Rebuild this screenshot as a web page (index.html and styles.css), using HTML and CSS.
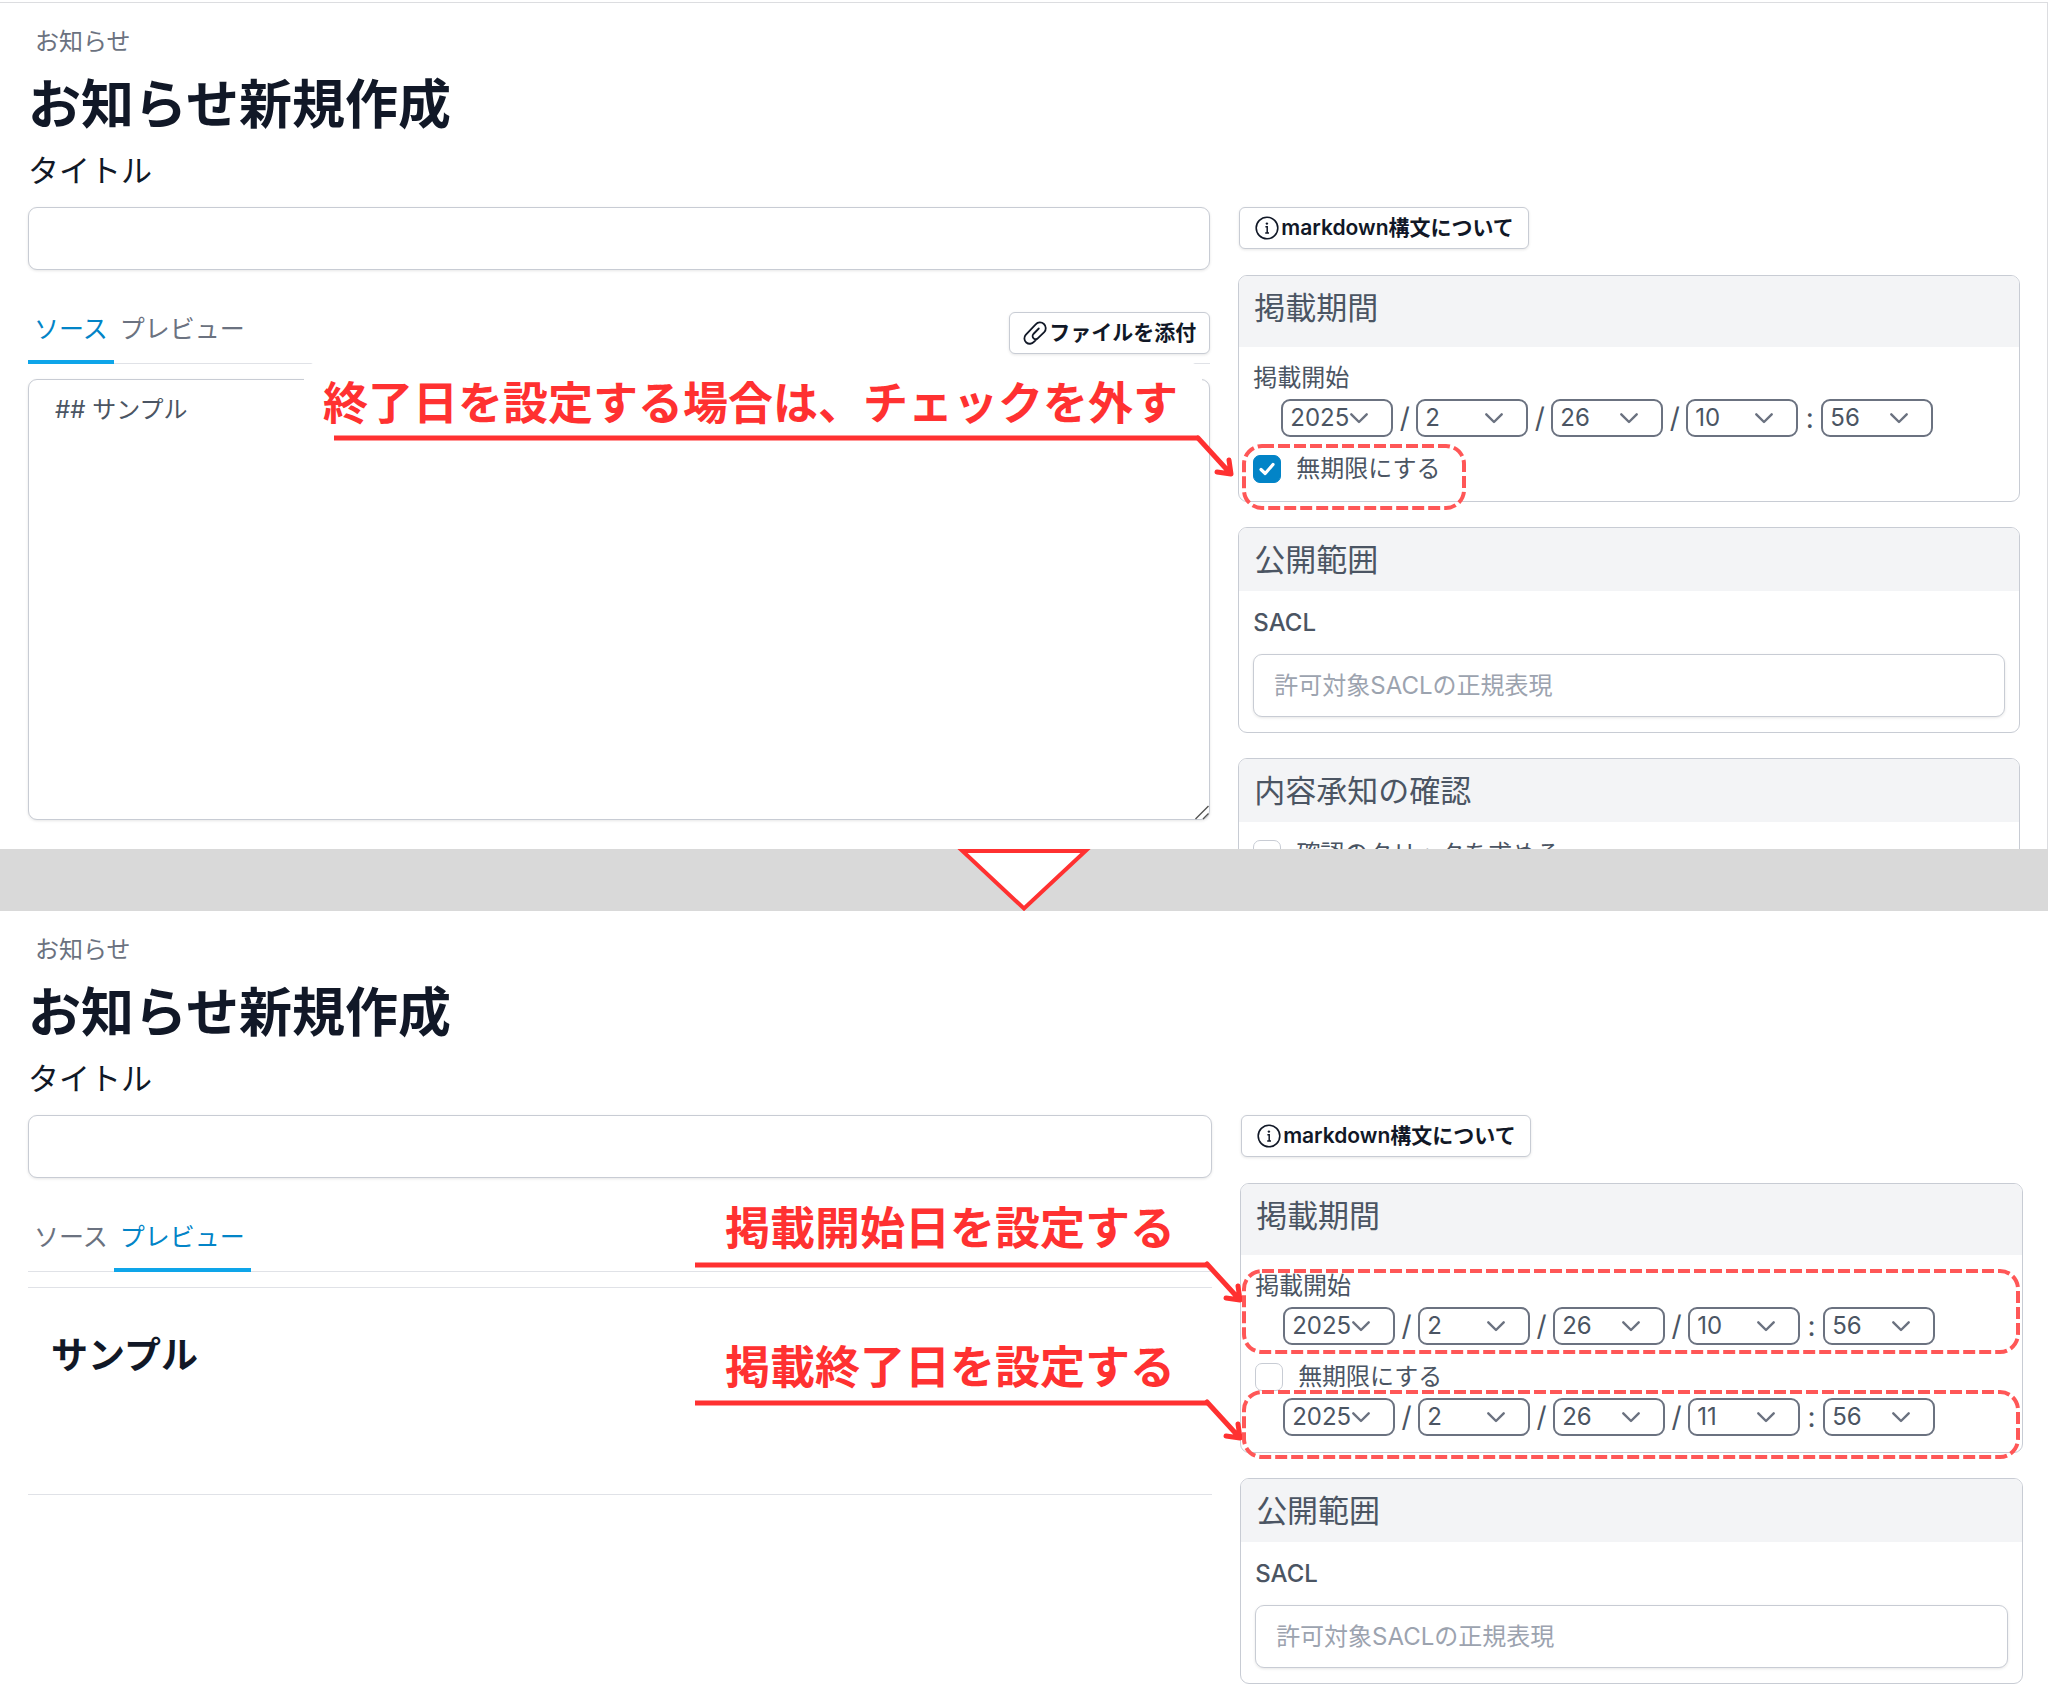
FILE: index.html
```html
<!DOCTYPE html>
<html lang="ja">
<head>
<meta charset="utf-8">
<meta name="viewport" content="width=device-width, initial-scale=1">
<title>お知らせ新規作成</title>
<link rel="stylesheet" href="styles.css">
</head>
<body>
<svg class="sprite" aria-hidden="true">
  <symbol id="chevron" viewBox="0 0 18 11"><path d="M1.300 1.300 9 9l7.700-7.700" fill="none" stroke="currentColor" stroke-width="2.400" stroke-linecap="round" stroke-linejoin="round"/></symbol>
  <symbol id="info" viewBox="0 0 24 24"><circle cx="12" cy="12" r="10.800" fill="none" stroke="currentColor" stroke-width="1.600"/><circle cx="11.900" cy="7.600" r="1.200" fill="currentColor"/><path d="M10.400 10.800h1.800v6M10.200 16.900h3.800" fill="none" stroke="currentColor" stroke-width="1.500"/></symbol>
  <symbol id="clip" viewBox="0 0 24 24"><path d="M12.800 19 10.900 20.900A5.300 5.300 0 0 1 2.700 13.800L12.700 3.300A5.800 5.800 0 0 1 21.200 11.200L15 17.200A3.100 3.100 0 0 1 10.400 13L15.800 7.500" fill="none" stroke="currentColor" stroke-width="1.800" stroke-linecap="round" stroke-linejoin="round"/></symbol>
  <symbol id="arrow" viewBox="0 0 40 44"><path d="M3 3 35 38M34 25 36 39 22 37" fill="none" stroke="currentColor" stroke-width="5" stroke-linecap="round" stroke-linejoin="round"/></symbol>
</svg>

<main class="guide">
  <section class="screen screen-source">
    <nav class="crumb"><a href="#">お知らせ</a></nav>
    <h1 class="heading">お知らせ新規作成</h1>
    <label class="title-label" for="title-a">タイトル</label>
    <div class="columns">
      <div class="editor">
        <input class="field" id="title-a" type="text">
        <div class="toolbar">
          <div class="tabs">
            <button class="tab is-active" type="button">ソース</button>
            <button class="tab" type="button">プレビュー</button>
          </div>
          <button class="btn" type="button"><svg class="icon" aria-hidden="true"><use href="#clip"/></svg>ファイルを添付</button>
        </div>
        <div class="source-wrap">
          <textarea class="source" aria-label="ソース">## サンプル</textarea>
          <svg class="grip" viewBox="0 0 16 16" aria-hidden="true"><path d="M1.500 15 14.500 2M9 15 14.500 9.500" fill="none" stroke="#555" stroke-width="1.400"/></svg>
        </div>
      </div>
      <aside class="side">
        <button class="btn btn-help" type="button"><svg class="icon" aria-hidden="true"><use href="#info"/></svg>markdown構文について</button>
        <section class="card">
          <h2 class="card-head card-head-tall">掲載期間</h2>
          <div class="card-body period">
            <p class="period-label">掲載開始</p>
            <div class="stamp">
              <span class="pick"><select aria-label="年"><option>2025</option></select><svg><use href="#chevron"/></svg></span><span class="sep">/</span>
              <span class="pick"><select aria-label="月"><option>2</option></select><svg><use href="#chevron"/></svg></span><span class="sep">/</span>
              <span class="pick"><select aria-label="日"><option>26</option></select><svg><use href="#chevron"/></svg></span><span class="sep">/</span>
              <span class="pick"><select aria-label="時"><option>10</option></select><svg><use href="#chevron"/></svg></span><span class="sep">:</span>
              <span class="pick"><select aria-label="分"><option>56</option></select><svg><use href="#chevron"/></svg></span>
            </div>
            <label class="check"><span class="box"><input type="checkbox" checked><svg viewBox="0 0 28 28"><path d="M8 14.500 12.200 18.500 20 9.500" fill="none" stroke="#fff" stroke-width="3.200" stroke-linecap="round" stroke-linejoin="round"/></svg></span>無期限にする</label>
          </div>
        </section>
        <section class="card">
          <h2 class="card-head">公開範囲</h2>
          <div class="card-body">
            <label class="sacl-label" for="sacl-a">SACL</label>
            <input class="field" id="sacl-a" type="text" placeholder="許可対象SACLの正規表現">
          </div>
        </section>
        <section class="card">
          <h2 class="card-head">内容承知の確認</h2>
          <div class="card-body">
            <label class="check"><span class="box"><input type="checkbox"></span>確認のクリックを求める</label>
          </div>
        </section>
      </aside>
    </div>
    <p class="callout callout-uncheck">終了日を設定する場合は、チェックを外す</p>
    <svg class="marks" aria-hidden="true">
      <path class="rule" d="M334 435H1198"/>
      <use class="arrow" href="#arrow" x="1195" y="432" width="40" height="44"/>
      <rect class="dash" x="1244" y="443" width="220" height="62" rx="18"/>
    </svg>
  </section>

  <div class="divider">
    <svg viewBox="0 0 134 62" aria-hidden="true"><path d="M5.500 2H128.500L67 59.500Z" fill="#fff" stroke="#ff3131" stroke-width="4"/></svg>
  </div>

  <section class="screen screen-preview">
    <nav class="crumb"><a href="#">お知らせ</a></nav>
    <h1 class="heading">お知らせ新規作成</h1>
    <label class="title-label" for="title-b">タイトル</label>
    <div class="columns">
      <div class="editor">
        <input class="field" id="title-b" type="text">
        <div class="toolbar">
          <div class="tabs">
            <button class="tab" type="button">ソース</button>
            <button class="tab is-active" type="button">プレビュー</button>
          </div>
        </div>
        <article class="preview"><h2>サンプル</h2></article>
      </div>
      <aside class="side">
        <button class="btn btn-help" type="button"><svg class="icon" aria-hidden="true"><use href="#info"/></svg>markdown構文について</button>
        <section class="card">
          <h2 class="card-head card-head-tall">掲載期間</h2>
          <div class="card-body period">
            <p class="period-label">掲載開始</p>
            <div class="stamp">
              <span class="pick"><select aria-label="開始年"><option>2025</option></select><svg><use href="#chevron"/></svg></span><span class="sep">/</span>
              <span class="pick"><select aria-label="開始月"><option>2</option></select><svg><use href="#chevron"/></svg></span><span class="sep">/</span>
              <span class="pick"><select aria-label="開始日"><option>26</option></select><svg><use href="#chevron"/></svg></span><span class="sep">/</span>
              <span class="pick"><select aria-label="開始時"><option>10</option></select><svg><use href="#chevron"/></svg></span><span class="sep">:</span>
              <span class="pick"><select aria-label="開始分"><option>56</option></select><svg><use href="#chevron"/></svg></span>
            </div>
            <label class="check"><span class="box"><input type="checkbox"></span>無期限にする</label>
            <div class="stamp">
              <span class="pick"><select aria-label="終了年"><option>2025</option></select><svg><use href="#chevron"/></svg></span><span class="sep">/</span>
              <span class="pick"><select aria-label="終了月"><option>2</option></select><svg><use href="#chevron"/></svg></span><span class="sep">/</span>
              <span class="pick"><select aria-label="終了日"><option>26</option></select><svg><use href="#chevron"/></svg></span><span class="sep">/</span>
              <span class="pick"><select aria-label="終了時"><option>11</option></select><svg><use href="#chevron"/></svg></span><span class="sep">:</span>
              <span class="pick"><select aria-label="終了分"><option>56</option></select><svg><use href="#chevron"/></svg></span>
            </div>
          </div>
        </section>
        <section class="card">
          <h2 class="card-head">公開範囲</h2>
          <div class="card-body">
            <label class="sacl-label" for="sacl-b">SACL</label>
            <input class="field" id="sacl-b" type="text" placeholder="許可対象SACLの正規表現">
          </div>
        </section>
      </aside>
    </div>
    <p class="callout callout-start">掲載開始日を設定する</p>
    <p class="callout callout-end">掲載終了日を設定する</p>
    <svg class="marks" aria-hidden="true">
      <path class="rule" d="M695 354H1207M695 492H1207"/>
      <use class="arrow" href="#arrow" x="1204" y="350" width="40" height="44"/>
      <use class="arrow" href="#arrow" x="1204" y="488" width="40" height="44"/>
      <rect class="dash" x="1244" y="360" width="774" height="81" rx="18"/>
      <rect class="dash" x="1244" y="481" width="774" height="65" rx="18"/>
    </svg>
  </section>
</main>
</body>
</html>
```

FILE: styles.css
```css
* { box-sizing: border-box; }

body {
  margin: 0;
  background: #fff;
  color: #4b5563;
  font: 24px/32px Inter, "Noto Sans CJK JP", sans-serif;
}

h1, h2, p { margin: 0; font-weight: 400; }
button, input, select, textarea { font: inherit; color: inherit; }

.sprite { display: none; }
.guide { padding-top: 2px; }

/* One captured screen of the form */
.screen {
  position: relative;
  padding: 23px 25px 8px 28px;
}
.screen-source {
  height: 847px;
  padding-right: 27px;
  border-top: 1px solid #dcdde0;
  border-right: 1px solid #dcdde0;
  overflow: hidden;
}

.crumb { padding: 0 7px; }
.crumb a { color: #6b7280; text-decoration: none; }
.heading {
  margin-top: 15px;
  color: #111827;
  font-size: 53px;
  line-height: 64px;
  font-weight: 700;
}
.title-label {
  display: block;
  margin: 14px 0 16px;
  color: #111827;
  font-size: 31px;
  line-height: 40px;
}

.columns {
  display: grid;
  grid-template-columns: minmax(0, 602fr) minmax(0, 398fr);
  gap: 28px;
}
.editor, .side { display: flex; flex-direction: column; }
.side { align-items: flex-start; }

.field {
  display: block;
  width: 100%;
  height: 63px;
  padding: 0 20px;
  border: 1px solid #c8ccd4;
  border-radius: 9px;
  background: #fff;
  box-shadow: 0 1px 3px rgba(0, 0, 0, .1);
}
.field::placeholder { color: #9ca3af; opacity: 1; }

.toolbar {
  display: flex;
  justify-content: space-between;
  align-items: flex-start;
  height: 52px;
  margin-top: 42px;
  border-bottom: 1px solid #e0e2e7;
}
.tabs { display: flex; height: 52px; }
.tab {
  padding: 0 6px 15px;
  border: 0;
  border-bottom: 4px solid transparent;
  background: none;
  color: #6b7280;
  font-size: 25px;
}
.tab.is-active { border-bottom-color: #0ea5e9; color: #0284c7; }

.btn {
  display: inline-flex;
  align-items: center;
  gap: 2px;
  height: 42px;
  padding: 0 13px;
  border: 1px solid #c8ccd4;
  border-radius: 6px;
  background: #fff;
  box-shadow: 0 1px 3px rgba(0, 0, 0, .1);
  color: #111827;
  font-size: 21px;
  font-weight: 600;
}
.btn-help { margin-left: 1px; padding: 0 14px 0 15px; }
.icon { width: 24px; height: 24px; }

.source-wrap { position: relative; display: flex; margin-top: 15px; }
.source {
  width: 100%;
  height: 441px;
  padding: 14px 26px;
  border: 1px solid #c8ccd4;
  border-radius: 9px;
  background: #fff;
  box-shadow: 0 1px 3px rgba(0, 0, 0, .1);
  resize: vertical;
}
.source::-webkit-resizer { display: none; }
.grip {
  position: absolute;
  right: 0;
  bottom: 0;
  width: 16px;
  height: 16px;
  pointer-events: none;
}
.preview {
  height: 208px;
  margin-top: 15px;
  padding: 44px 23px;
  border: solid #e0e2e7;
  border-width: 1px 0;
}
.preview h2 { color: #111827; font-size: 37px; line-height: 48px; font-weight: 700; }

.card {
  width: 100%;
  margin-top: 25px;
  border: 1px solid #c8ccd4;
  border-radius: 9px;
  overflow: hidden;
}
.btn + .card { margin-top: 26px; }
.card-head {
  padding: 12px 15px 11px;
  background: #f3f4f6;
  font-size: 31px;
  line-height: 40px;
}
.card-head-tall { padding-bottom: 19px; }
.card-body { padding: 16px 14px 15px; }

.period { padding: 15px 14px 16px; }
.stamp {
  display: flex;
  align-items: center;
  padding-left: 28px;
  margin-top: 5px;
}
.pick { position: relative; display: flex; }
.pick select {
  width: 112px;
  height: 38px;
  padding: 0 7px;
  border: 2px solid #6b7280;
  border-radius: 9px;
  background: #fff;
  appearance: none;
}
.pick svg {
  position: absolute;
  top: 14px;
  right: 25px;
  width: 18px;
  height: 11px;
  color: #6b7280;
  pointer-events: none;
}
.sep { width: 23px; font-size: 28px; text-align: center; }

.check { display: flex; align-items: center; gap: 15px; }
.period .check { margin-top: 16px; }
.box { position: relative; display: flex; width: 28px; height: 28px; }
.box input {
  width: 28px;
  height: 28px;
  margin: 0;
  border: 1px solid #c8ccd4;
  border-radius: 7px;
  background: #fff;
  appearance: none;
}
.box input:checked { border-color: #0284c7; background: #0284c7; }
.box svg { position: absolute; inset: 0; }

.sacl-label { display: block; margin-bottom: 15px; font-weight: 500; }

/* Band between the two screens */
.divider { height: 62px; background: #d9d9d9; text-align: center; }
.divider svg { display: block; width: 134px; height: 62px; margin: 0 auto; }

/* Red notes drawn over the screens */
.callout {
  position: absolute;
  color: #ff3131;
  font-size: 45px;
  line-height: 60px;
  font-weight: 700;
  white-space: nowrap;
}
.callout-uncheck {
  top: 357px;
  left: 304px;
  padding: 14px 24px 0 19px;
  border-radius: 19px;
  background: #fff;
}
.callout-start { top: 288px; left: 725px; }
.callout-end { top: 427px; left: 725px; }
.marks {
  position: absolute;
  inset: 0;
  width: 100%;
  height: 100%;
  pointer-events: none;
}
.rule { fill: none; stroke: #ff3131; stroke-width: 5px; }
.arrow { color: #ff3131; }
.dash { fill: none; stroke: #ff5757; stroke-width: 4px; stroke-dasharray: 12 4; }
```
